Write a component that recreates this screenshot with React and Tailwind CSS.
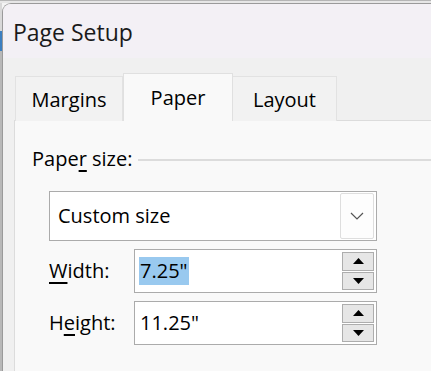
import React from "react";

const font = { fontFamily: '"Open Sans", "Noto Sans", sans-serif' };

const SpinButtons = () => (
  <div className="flex flex-col gap-[1px] w-[32px] h-[38px] mr-[2px]">
    <button className="flex-1 flex items-center justify-center bg-[#e6e6e6] border border-[#adadad]">
      <svg width="11" height="6" viewBox="0 0 11 6">
        <polygon points="5.5,0 11,6 0,6" fill="#000" />
      </svg>
    </button>
    <button className="flex-1 flex items-center justify-center bg-[#e6e6e6] border border-[#adadad]">
      <svg width="11" height="6" viewBox="0 0 11 6">
        <polygon points="0,0 11,0 5.5,6" fill="#000" />
      </svg>
    </button>
  </div>
);

const SpinField = ({ label, underline, value, selected }) => {
  const i = label.indexOf(underline);
  return (
    <div className="flex items-center h-[44px]">
      <span className="w-[85px] text-[20px] text-black">
        {label.slice(0, i)}
        <span className="underline underline-offset-[4px] decoration-[1.5px]">{underline}</span>
        {label.slice(i + 1)}
      </span>
      <div className="w-[243px] h-full flex items-center justify-between bg-white border border-[#ababab] pl-[4px]">
        <span
          className={`text-[20px] leading-[28px] px-[1px] ${
            selected ? "bg-[#99c9ef]" : ""
          }`}
        >
          {value}
        </span>
        <SpinButtons />
      </div>
    </div>
  );
};

export default function App() {
  return (
    <div
      className="w-[431px] h-[371px] overflow-hidden bg-[#f4f4f4] flex flex-col"
      style={font}
    >
      {/* desktop behind dialog */}
      <div className="h-[3px] flex border-t border-[#b5b5b5] bg-[#e6e6e6]" />
      <div className="flex flex-1 min-h-0">
        <div className="w-[2px] flex flex-col">
          <div className="h-[28px] bg-[#d8d8d8]" />
          <div className="h-[20px] bg-[#3c7fc0]" />
          <div className="flex-1 bg-[#b8b8b8]" />
        </div>
        {/* dialog */}
        <div className="flex-1 flex flex-col rounded-tl-[9px] border-l border-t border-[#9a9a9a] bg-[#f0f0f0] overflow-hidden">
          <div className="h-[54px] shrink-0 bg-[#f3f0f5] flex items-center pl-[10px] pt-[2px]">
            <span className="text-[23px] text-[#1a1a1a]">Page Setup</span>
          </div>

          <div className="flex-1 flex flex-col pt-[16px] pl-[11px]">
            {/* tabs */}
            <div className="flex items-end h-[47px] pl-[1px] relative z-10 -mb-[1px]">
              <div className="w-[108px] h-[45px] flex items-center justify-center bg-[#f2f2f2] border border-[#e2e2e2] border-b-0 text-[20px] text-black pt-[2px]">
                Margins
              </div>
              <div className="w-[110px] h-[48px] flex items-center justify-center bg-[#f9f9f9] border border-[#e0e0e0] border-b-0 text-[20px] text-black">
                Paper
              </div>
              <div className="w-[104px] h-[45px] flex items-center justify-center bg-[#f2f2f2] border border-[#e2e2e2] border-b-0 border-l-0 text-[20px] text-black pt-[2px]">
                Layout
              </div>
            </div>

            {/* panel */}
            <div className="flex-1 bg-[#f9f9f9] border-l border-t border-[#dcdcdc] pl-[17px] pt-[25px]">
              <div className="flex items-center h-[26px]">
                <span className="text-[20px] text-black leading-[26px]">
                  Pape
                  <span className="underline underline-offset-[4px] decoration-[1.5px]">r</span>{" "}
                  size:
                </span>
                <div className="flex-1 h-[2px] bg-[#dcdcdc] ml-[6px] mt-[1px]" />
              </div>

              <div className="ml-[17px] mt-[19px] flex flex-col gap-[8px]">
                <div className="w-[328px] h-[50px] flex items-center justify-between bg-white border border-[#ababab] pl-[8px]">
                  <span className="text-[20px] text-black">Custom size</span>
                  <div className="w-[34px] h-[46px] mr-[2px] flex items-center justify-center border border-[#dedede] rounded-[2px] bg-[#fdfdfd]">
                    <svg width="14" height="8" viewBox="0 0 14 8">
                      <polyline
                        points="1,1 7,7 13,1"
                        fill="none"
                        stroke="#555"
                        strokeWidth="1.2"
                      />
                    </svg>
                  </div>
                </div>

                <SpinField label="Width:" underline="W" value={'7.25"'} selected />
                <SpinField label="Height:" underline="e" value={'11.25"'} />
              </div>
            </div>
          </div>
        </div>
      </div>
    </div>
  );
}
